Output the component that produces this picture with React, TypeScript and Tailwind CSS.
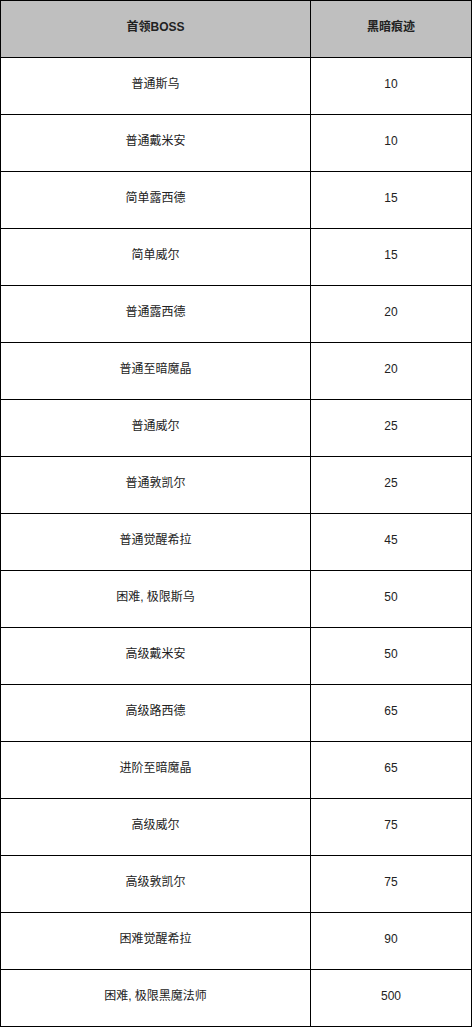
import { Fragment } from 'react';

const rows: [string, string][] = [
  ['普通斯乌', '10'],
  ['普通戴米安', '10'],
  ['简单露西德', '15'],
  ['简单威尔', '15'],
  ['普通露西德', '20'],
  ['普通至暗魔晶', '20'],
  ['普通威尔', '25'],
  ['普通敦凯尔', '25'],
  ['普通觉醒希拉', '45'],
  ['困难, 极限斯乌', '50'],
  ['高级戴米安', '50'],
  ['高级路西德', '65'],
  ['进阶至暗魔晶', '65'],
  ['高级威尔', '75'],
  ['高级敦凯尔', '75'],
  ['困难觉醒希拉', '90'],
  ['困难, 极限黑魔法师', '500'],
];

export default function App() {
  return (
    <div className="w-[472px] bg-white text-[12px] text-[#222] font-['Liberation_Sans','Noto_Sans_CJK_SC',sans-serif]">
      <div className="grid grid-cols-[310px_1fr] border-l border-t border-black">
        <div className="h-[57px] pb-[4px] flex items-center justify-center bg-[#bfbfbf] border-r border-b border-black font-bold">
          首领BOSS
        </div>
        <div className="h-[57px] pb-[4px] flex items-center justify-center bg-[#bfbfbf] border-r border-b border-black font-bold">
          黑暗痕迹
        </div>
        {rows.map(([name, value]) => (
          <Fragment key={name}>
            <div className="h-[57px] pb-[4px] flex items-center justify-center border-r border-b border-black">
              {name}
            </div>
            <div className="h-[57px] pb-[4px] flex items-center justify-center border-r border-b border-black">
              {value}
            </div>
          </Fragment>
        ))}
      </div>
    </div>
  );
}
